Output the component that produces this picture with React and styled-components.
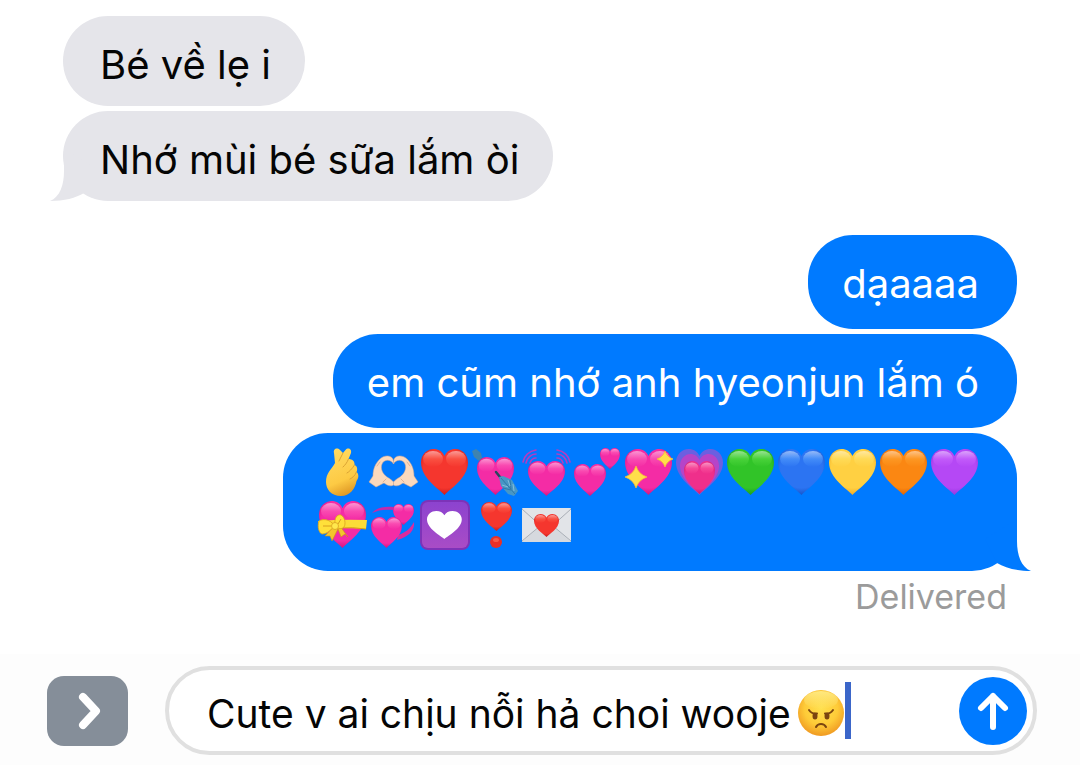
import React, { useId } from "react";
import styled, { createGlobalStyle, css } from "styled-components";

const GlobalStyle = createGlobalStyle`
  * { box-sizing: border-box; }
  body {
    margin: 0;
    background: #fff;
    color: #050505;
    font-family: Inter, "Liberation Sans", sans-serif;
  }
`;

const BLUE = "#007aff";
const GREY = "#e5e5ea";

const Screen = styled.main`
  display: flex;
  flex-direction: column;
  min-height: 100vh;
`;

const Thread = styled.section`
  flex: 1;
  display: flex;
  flex-direction: column;
  gap: 34px;
  padding: 16px 63px 0;
`;

const Group = styled.div`
  display: flex;
  flex-direction: column;
  align-items: ${(p) => (p.$mine ? "flex-end" : "flex-start")};
  gap: 5px;
`;

const Bubble = styled.div`
  position: relative;
  max-width: 100%;
  border-radius: 45px;
  font-size: 40px;
  line-height: 60px;
  ${(p) =>
    p.$mine
      ? css`
          padding: 19px 38px 15px 34px;
          background: ${BLUE};
          color: #fff;
        `
      : css`
          padding: 19px 34px 11px 37px;
          background: ${GREY};
        `}
`;

const EmojiBubble = styled(Bubble)`
  padding: 11px 37px 19px 34px;
`;

const EmojiRun = styled.div`
  display: flex;
  flex-wrap: wrap;
  max-width: 663px;
`;

const EmojiSvg = styled.svg`
  display: block;
  flex: none;
  width: 51px;
  height: 54px;
`;

const TailSvg = styled.svg`
  position: absolute;
  bottom: 0;
  width: 50px;
  height: 52px;
  ${(p) => (p.$mine ? "right: -14px;" : "left: -13px; transform: scaleX(-1);")}
`;

const Status = styled.div`
  padding-right: 10px;
  font-size: 34px;
  line-height: 42px;
  color: #9b9b9b;
`;

const Composer = styled.form`
  display: flex;
  align-items: center;
  gap: 37px;
  padding: 12px 43px 10px 47px;
  background: #fdfdfd;
`;

const DrawerButton = styled.button`
  display: grid;
  place-items: center;
  flex: none;
  width: 81px;
  height: 70px;
  padding: 0 0 0 4px;
  border: 0;
  border-radius: 17px;
  background: #858e99;
`;

const Field = styled.div`
  flex: 1;
  min-width: 0;
  display: flex;
  align-items: center;
  height: 89px;
  padding: 0 6px 0 38px;
  border: 4px solid #e0e0e0;
  border-radius: 45px;
  background: #fff;
`;

const MessageInput = styled.input`
  field-sizing: content;
  min-width: 0;
  height: 60px;
  padding: 6px 0 0;
  border: 0;
  outline: 0;
  background: none;
  color: #050505;
  font: inherit;
  font-size: 39px;
`;

const FaceSvg = styled.svg`
  flex: none;
  width: 48px;
  height: 48px;
  margin: 4px 0 0 6px;
`;

const Caret = styled.span`
  flex: none;
  width: 6px;
  height: 57px;
  background: #3b66c9;
`;

const SendButton = styled.button`
  display: grid;
  place-items: center;
  flex: none;
  width: 68px;
  height: 68px;
  margin-left: auto;
  padding: 0;
  border: 0;
  border-radius: 50%;
  background: ${BLUE};
`;

const HEART =
  "M25.5 51C20 45 2 34 2 18.5C2 10.5 8 5 14.5 5C19.5 5 23.5 7.5 25.5 12C27.5 7.5 31.5 5 36.5 5C43 5 49 10.5 49 18.5C49 34 31 45 25.5 51Z";

const TONES = {
  red: ["#ff6a55", "#f5362e", "#c3191c"],
  pink: ["#ff69bd", "#f42ca5", "#cf1277"],
  magenta: ["#ff62a8", "#ef2f8b", "#c01c66"],
  green: ["#5fe04a", "#31c428", "#1c9a1c"],
  blue: ["#5aa4ff", "#2c74f2", "#1450c4"],
  yellow: ["#ffe46a", "#ffd042", "#f0a41f"],
  orange: ["#ffa733", "#fb8712", "#d95f05"],
  purple: ["#cf6bff", "#b548f5", "#9335dc"],
};

/* A glossy heart scaled into the box x, y, w, h. */
function Heart({ tone, x = 2, y = 5, w = 47, h = 46 }) {
  const id = useId();
  const [light, base, dark] = TONES[tone];
  return (
    <g transform={`translate(${x} ${y}) scale(${w / 47} ${h / 46}) translate(-2 -5)`}>
      <defs>
        <radialGradient id={id + "b"} cx="0.5" cy="0.4" r="0.62">
          <stop offset="0" stopColor={base} />
          <stop offset="0.72" stopColor={base} />
          <stop offset="1" stopColor={dark} />
        </radialGradient>
        <linearGradient id={id + "g"} x1="0" y1="0" x2="0" y2="1">
          <stop offset="0" stopColor="#fff" stopOpacity="0.5" />
          <stop offset="0.5" stopColor={light} stopOpacity="0.5" />
          <stop offset="1" stopColor={light} stopOpacity="0" />
        </linearGradient>
      </defs>
      <path d={HEART} fill={`url(#${id}b)`} />
      <ellipse cx="14" cy="15" rx="10" ry="8" fill={`url(#${id}g)`} />
      <ellipse cx="37" cy="15" rx="10" ry="8" fill={`url(#${id}g)`} />
    </g>
  );
}

function FingerHeart() {
  const id = useId();
  return (
    <>
      <defs>
        <linearGradient id={id} x1="0.2" y1="0" x2="0.5" y2="1">
          <stop offset="0" stopColor="#ffdb63" />
          <stop offset="0.7" stopColor="#fdca44" />
          <stop offset="1" stopColor="#e09a26" />
        </linearGradient>
      </defs>
      <path
        d="M17 9C16 5 20 3 23 6L26 9L28.500 6C31 3 35 5 34 9L31.500 15C35 15 38 17 37.500 21C40 22 41 25 39.500 28C42 30 42 34 39.500 37C38 45 33 52 24 52C14 52 9 45 9 38C9 29 14 26 18 19Z"
        fill={`url(#${id})`}
      />
      <path
        d="M26 9L22 17M31.500 15C30 19 28 21 26 23M37.500 21C35 25 32 28 30 29M39.500 28C38 32 35 34 33 35"
        fill="none"
        stroke="#dba333"
        strokeWidth="1"
        strokeLinecap="round"
      />
    </>
  );
}

function HeartHands() {
  const hand = (
    <>
      <path
        d="M1 38L5 32C5 24 8 19 12 15C15 12 20 11 23 13C25 14 25.500 16 25.500 20C23 15 16 15 14 20C12 25 15 30 19 33C22 35 24 36 25.500 38V41C22 43 19 41 16 39C13 40 11 42 8 43Z"
        fill="#fbd9bd"
        stroke="#dba88c"
        strokeWidth="0.500"
      />
      <path
        d="M9 22L12 18M18 35L15 38"
        fill="none"
        stroke="#dba88c"
        strokeWidth="0.800"
        strokeLinecap="round"
      />
    </>
  );
  return (
    <>
      {hand}
      <g transform="translate(51 0) scale(-1 1)">{hand}</g>
    </>
  );
}

function ArrowHeart() {
  return (
    <>
      <path d="M7 11L15 19" stroke="#3d6f8c" strokeWidth="2" />
      <path d="M2 7L6 5L11 9L12 14L9 17L4 13Z" fill="#3f83ae" />
      <Heart tone="pink" x={7} y={13} w={37} h={38} />
      <path d="M26 28L34 38" stroke="#27475f" strokeWidth="2.500" strokeLinecap="round" />
      <path d="M29 33L33 32L42 36L48 47L44 52L38 50L31 42Z" fill="#4797c6" />
      <path
        d="M31 34L45 50M40 36L41 45M33 44L41 46"
        stroke="#2f719c"
        strokeWidth="0.800"
      />
      <path d="M38 36L40 42M43 40L44 47M32 41L38 43" stroke="#93c5dd" strokeWidth="0.800" />
    </>
  );
}

function BeatingHeart() {
  const arcs = "M2 18C3 12 8 7 15 6M5 19C6 14 10 10 15 10M9 19C10 16 12 14 15 14";
  return (
    <>
      <g fill="none" stroke="#b43cc0" strokeWidth="1.600" strokeLinecap="round">
        <path d={arcs} />
        <path d={arcs} transform="translate(51 0) scale(-1 1)" />
      </g>
      <Heart tone="pink" x={7} y={17} w={37} h={35} />
    </>
  );
}

function Sparkle({ x, y, r }) {
  const k = r * 0.24;
  return (
    <path
      d={`M${x} ${y - r}Q${x + k} ${y - k} ${x + r} ${y}Q${x + k} ${y + k} ${x} ${y + r}Q${x - k} ${y + k} ${x - r} ${y}Q${x - k} ${y - k} ${x} ${y - r}Z`}
      fill="#ffdf4a"
      stroke="#f7bd34"
      strokeWidth="0.800"
    />
  );
}

function GrowingHeart() {
  return (
    <>
      <path d={HEART} fill="#6c5fe0" />
      <g transform="translate(6 10) scale(0.830 0.870) translate(-2 -5)">
        <path d={HEART} fill="#b644c8" />
      </g>
      <Heart tone="magenta" x={10} y={17} w={31} h={33} />
    </>
  );
}

function RibbonHeart() {
  return (
    <>
      <Heart tone="pink" x={2} y={3} w={47} h={47} />
      <path d="M1 23Q25 21 50 22L49 31Q25 29 2 31Z" fill="#fbdc38" />
      <path d="M22 30Q36 29 49 31" fill="none" stroke="#d99c15" strokeWidth="1" />
      <path d="M16 29L8 38L13 38L15 43L21 31L24 39L28 36L31 39L23 28Z" fill="#f3c62c" stroke="#c98e18" strokeWidth="0.600" />
      <path
        d="M18 28C12 20 5 21 2 23C0 29 2 35 5 36C11 36 14 31 18 28ZM18 28C17 20 20 16 24 17C28 19 29 26 27 29C24 32 20 30 18 28Z"
        fill="#ffe03a"
        stroke="#d9a01f"
        strokeWidth="0.800"
      />
      <path d="M6 28L14 28M24 21L21 26" stroke="#d9a01f" strokeWidth="1" />
      <circle cx="18" cy="28" r="3.500" fill="#ffe84d" stroke="#d9a01f" strokeWidth="0.800" />
    </>
  );
}

function RevolvingHearts() {
  return (
    <>
      <path d="M4 15C8 10 16 8 26 9L25 12C17 11 10 12 4 15Z" fill="#c22bab" />
      <path d="M46 24C47 32 41 39 29 42L30 37C37 35 42 31 46 24Z" fill="#dc2b9e" />
      <Heart tone="pink" x={25} y={6} w={21} h={21} />
      <Heart tone="pink" x={3} y={19} w={31} h={31} />
    </>
  );
}

function HeartDecoration() {
  const id = useId();
  return (
    <>
      <defs>
        <linearGradient id={id} x1="0" y1="0" x2="0" y2="1">
          <stop offset="0" stopColor="#8c43cf" />
          <stop offset="1" stopColor="#a94cc6" />
        </linearGradient>
      </defs>
      <rect x="1" y="2" width="50" height="50" rx="8" fill="#7d33b8" />
      <rect x="3" y="4" width="46" height="46" rx="6" fill={`url(#${id})`} />
      <g transform="translate(8 13) scale(0.740 0.610) translate(-2 -5)">
        <path d={HEART} fill="#fff" />
      </g>
    </>
  );
}

function HeartExclamation() {
  return (
    <>
      <Heart tone="red" x={11} y={4} w={31} h={29} />
      <circle cx="26" cy="44" r="6" fill="#ea3026" />
      <ellipse cx="26" cy="42" rx="3" ry="2" fill="#f65a48" />
    </>
  );
}

function LoveLetter() {
  return (
    <>
      <rect x="1" y="10" width="49" height="34" rx="1" fill="#e2e4e8" />
      <path d="M1 44L20 27H31L50 44Z" fill="#d6d9de" />
      <path d="M1 11L25.500 33L50 11M1 43L19 28M50 43L32 28" fill="none" stroke="#a9aeb6" strokeWidth="1" />
      <Heart tone="red" x={13} y={16} w={25} h={23} />
    </>
  );
}

const EMOJI = [
  ["Hand with index finger and thumb crossed", <FingerHeart />],
  ["Heart hands", <HeartHands />],
  ["Red heart", <Heart tone="red" />],
  ["Heart with arrow", <ArrowHeart />],
  ["Beating heart", <BeatingHeart />],
  [
    "Two hearts",
    <>
      <Heart tone="pink" x={2} y={20} w={32} h={32} />
      <Heart tone="pink" x={28} y={4} w={20} h={21} />
    </>,
  ],
  [
    "Sparkling heart",
    <>
      <Heart tone="pink" />
      <Sparkle x={13} y={33} r={11} />
      <Sparkle x={42} y={15} r={8} />
    </>,
  ],
  ["Growing heart", <GrowingHeart />],
  ["Green heart", <Heart tone="green" />],
  ["Blue heart", <Heart tone="blue" />],
  ["Yellow heart", <Heart tone="yellow" />],
  ["Orange heart", <Heart tone="orange" />],
  ["Purple heart", <Heart tone="purple" />],
  ["Heart with ribbon", <RibbonHeart />],
  ["Revolving hearts", <RevolvingHearts />],
  ["Heart decoration", <HeartDecoration />],
  ["Heart exclamation", <HeartExclamation />],
  ["Love letter", <LoveLetter />],
];

function Tail({ mine }) {
  return (
    <TailSvg $mine={mine} viewBox="0 0 50 52" aria-hidden="true">
      <path
        d="M36 0V22C36 36 40 48 50 52C36 52 24 49 16 44L4 20Z"
        fill={mine ? BLUE : GREY}
      />
    </TailSvg>
  );
}

function AngryFace() {
  return (
    <FaceSvg viewBox="0 0 48 48" role="img" aria-label="Angry face">
      <defs>
        <radialGradient id="face" cx="0.5" cy="0.4" r="0.6">
          <stop offset="0" stopColor="#ffe04f" />
          <stop offset="0.6" stopColor="#fecb38" />
          <stop offset="1" stopColor="#f09a22" />
        </radialGradient>
        <linearGradient id="shine" x1="0" y1="0" x2="0" y2="1">
          <stop offset="0" stopColor="#fff6a0" stopOpacity="0.7" />
          <stop offset="1" stopColor="#fff6a0" stopOpacity="0" />
        </linearGradient>
      </defs>
      <circle cx="24" cy="24" r="23" fill="url(#face)" />
      <ellipse cx="24" cy="11" rx="17" ry="9" fill="url(#shine)" />
      <ellipse cx="18" cy="27" rx="2.500" ry="3.500" fill="#7b4510" />
      <ellipse cx="30" cy="27" rx="2.500" ry="3.500" fill="#7b4510" />
      <path
        d="M12 21C14 24 17 25 20 24.500M36 21C34 24 31 25 28 24.500M19 38C21 34 27 34 29 38"
        fill="none"
        stroke="#7b4510"
        strokeWidth="2"
        strokeLinecap="round"
      />
    </FaceSvg>
  );
}

export default function App() {
  return (
    <>
      <GlobalStyle />
      <Screen>
        <Thread>
          <Group>
            <Bubble>Bé về lẹ i</Bubble>
            <Bubble>
              Nhớ mùi bé sữa lắm òi
              <Tail />
            </Bubble>
          </Group>
          <Group $mine>
            <Bubble $mine>dạaaaa</Bubble>
            <Bubble $mine>em cũm nhớ anh hyeonjun lắm ó</Bubble>
            <EmojiBubble $mine>
              <EmojiRun>
                {EMOJI.map(([label, art]) => (
                  <EmojiSvg key={label} viewBox="0 0 51 54" role="img" aria-label={label}>
                    {art}
                  </EmojiSvg>
                ))}
              </EmojiRun>
              <Tail mine />
            </EmojiBubble>
            <Status>Delivered</Status>
          </Group>
        </Thread>
        <Composer onSubmit={(e) => e.preventDefault()}>
          <DrawerButton type="button" aria-label="Show apps">
            <svg width="24" height="40" viewBox="0 0 24 40" aria-hidden="true">
              <path
                d="M5 6L18 20L5 34"
                fill="none"
                stroke="#fff"
                strokeWidth="8"
                strokeLinecap="round"
                strokeLinejoin="round"
              />
            </svg>
          </DrawerButton>
          <Field>
            <MessageInput
              type="text"
              aria-label="Message"
              defaultValue="Cute v ai chịu nỗi hả choi wooje"
            />
            <AngryFace />
            <Caret />
            <SendButton type="submit" aria-label="Send">
              <svg width="34" height="40" viewBox="0 0 34 40" aria-hidden="true">
                <path
                  d="M17 36V5M5 17L17 5L29 17"
                  fill="none"
                  stroke="#fff"
                  strokeWidth="6"
                  strokeLinecap="round"
                  strokeLinejoin="round"
                />
              </svg>
            </SendButton>
          </Field>
        </Composer>
      </Screen>
    </>
  );
}
